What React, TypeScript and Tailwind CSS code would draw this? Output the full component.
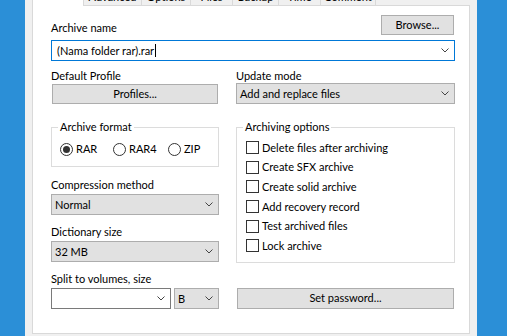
import React from 'react';

const tabs = [
  { label: 'Advanced', w: 'w-[58px]' },
  { label: 'Options', w: 'w-[49px]' },
  { label: 'Files', w: 'w-[42px]' },
  { label: 'Backup', w: 'w-[46px]' },
  { label: 'Time', w: 'w-[42px]' },
  { label: 'Comment', w: 'w-[55px]' },
];

const options = [
  'Delete files after archiving',
  'Create SFX archive',
  'Create solid archive',
  'Add recovery record',
  'Test archived files',
  'Lock archive',
];

function Chevron() {
  return (
    <svg width="8" height="5" viewBox="0 0 8 5" className="shrink-0">
      <path d="M0.5 0.5 L4 4 L7.5 0.5" fill="none" stroke="#444" strokeWidth="1" />
    </svg>
  );
}

function Select({ value, className = '' }: { value: string; className?: string }) {
  return (
    <div
      className={`flex h-[21px] items-center justify-between border border-[#adadad] bg-[#e1e1e1] pl-[3px] pr-[5px] ${className}`}
    >
      <span className="leading-[16px]">{value}</span>
      <Chevron />
    </div>
  );
}

function Button({ children, className = '' }: { children: React.ReactNode; className?: string }) {
  return (
    <div
      className={`flex items-center justify-center border border-[#adadad] bg-[#e1e1e1] leading-[16px] ${className}`}
    >
      {children}
    </div>
  );
}

function Radio({ label, checked, className = '' }: { label: string; checked?: boolean; className?: string }) {
  return (
    <div className={`flex h-[16px] items-center gap-[3px] ${className}`}>
      <div className="flex h-[13px] w-[13px] items-center justify-center rounded-full border border-[#333] bg-white">
        {checked && <div className="h-[7px] w-[7px] rounded-full bg-[#333]" />}
      </div>
      <span className="leading-[16px]">{label}</span>
    </div>
  );
}

export default function App() {
  return (
    <div className="flex h-[336px] w-[507px] overflow-hidden bg-[#2b8fd7] font-['Lato','Segoe_UI',sans-serif] text-[11px] text-black">
      <div className="w-[25px] shrink-0" />

      <div className="flex w-[452px] shrink-0 flex-col bg-[#f0f0f0] px-[7px]">
        {/* tab strip, scrolled mostly out of view */}
        <div className="flex h-[5px]">
          <div className="relative z-10 -mb-[1px] h-[6px] w-[52px] border-x border-[#d9d9d9] bg-white" />
          {tabs.map((t) => (
            <div
              key={t.label}
              className={`flex h-[5px] justify-center overflow-hidden border-r border-[#d9d9d9] ${t.w}`}
            >
              <span className="-mt-[11px] leading-[16px]">{t.label}</span>
            </div>
          ))}
        </div>

        <div className="mb-[2px] flex-1 border border-[#d9d9d9] bg-white pl-[18px] pr-[14px] pt-[9px]">
          <div className="flex h-[20px] items-end justify-between">
            <span className="leading-[14px]">Archive name</span>
            <Button className="mr-[1px] h-[20px] w-[73px]">Browse...</Button>
          </div>

          <div className="mt-[5px] flex h-[21px] items-center justify-between border border-[#0078d7] pl-[5px] pr-[5px]">
            <div className="flex items-center">
              <span className="leading-[16px]">(Nama folder rar).rar</span>
              <span className="ml-[1px] h-[13px] w-[1px] bg-black" />
            </div>
            <Chevron />
          </div>

          <div className="mt-[7px] grid grid-cols-[168px_219px] gap-x-[17px]">
            <div className="flex flex-col">
              <span className="h-[16px] leading-[16px]">Default Profile</span>
              <Button className="mx-[1px] h-[20px]">Profiles...</Button>

              <fieldset className="mt-[15px] border border-[#dcdcdc] pb-[9px] pl-[6px]">
                <legend className="px-[2px] leading-[16px]">Archive format</legend>
                <div className="ml-[2px] mt-[6px] flex">
                  <Radio label="RAR" checked className="w-[53px]" />
                  <Radio label="RAR4" className="w-[55px]" />
                  <Radio label="ZIP" />
                </div>
              </fieldset>

              <span className="mt-[10px] h-[16px] leading-[16px]">Compression method</span>
              <Select value="Normal" className="mt-[1px]" />

              <span className="mt-[9px] h-[16px] leading-[16px]">Dictionary size</span>
              <Select value="32 MB" className="mt-[1px]" />

              <span className="mt-[9px] h-[16px] leading-[16px]">Split to volumes, size</span>
              <div className="mt-[1px] flex gap-[3px]">
                <div className="flex h-[21px] w-[120px] items-center justify-end border border-[#7a7a7a] bg-white pr-[5px]">
                  <Chevron />
                </div>
                <Select value="B" className="w-[45px]" />
              </div>
            </div>

            <div className="flex flex-col">
              <span className="h-[15px] leading-[15px]">Update mode</span>
              <Select value="Add and replace files" />

              <fieldset className="mt-[15px] border border-[#dcdcdc] pb-[6px] pl-[6px]">
                <legend className="px-[2px] leading-[16px]">Archiving options</legend>
                <div className="ml-[3px] mt-[3px] flex flex-col">
                  {options.map((o) => (
                    <div key={o} className="flex h-[19.6px] items-center gap-[3px]">
                      <div className="h-[13px] w-[13px] border border-[#333] bg-white" />
                      <span className="leading-[16px]">{o}</span>
                    </div>
                  ))}
                </div>
              </fieldset>

              <Button className="mx-[1px] mt-[25px] h-[21px]">Set password...</Button>
            </div>
          </div>
        </div>
      </div>

      <div className="flex-1" />
    </div>
  );
}
